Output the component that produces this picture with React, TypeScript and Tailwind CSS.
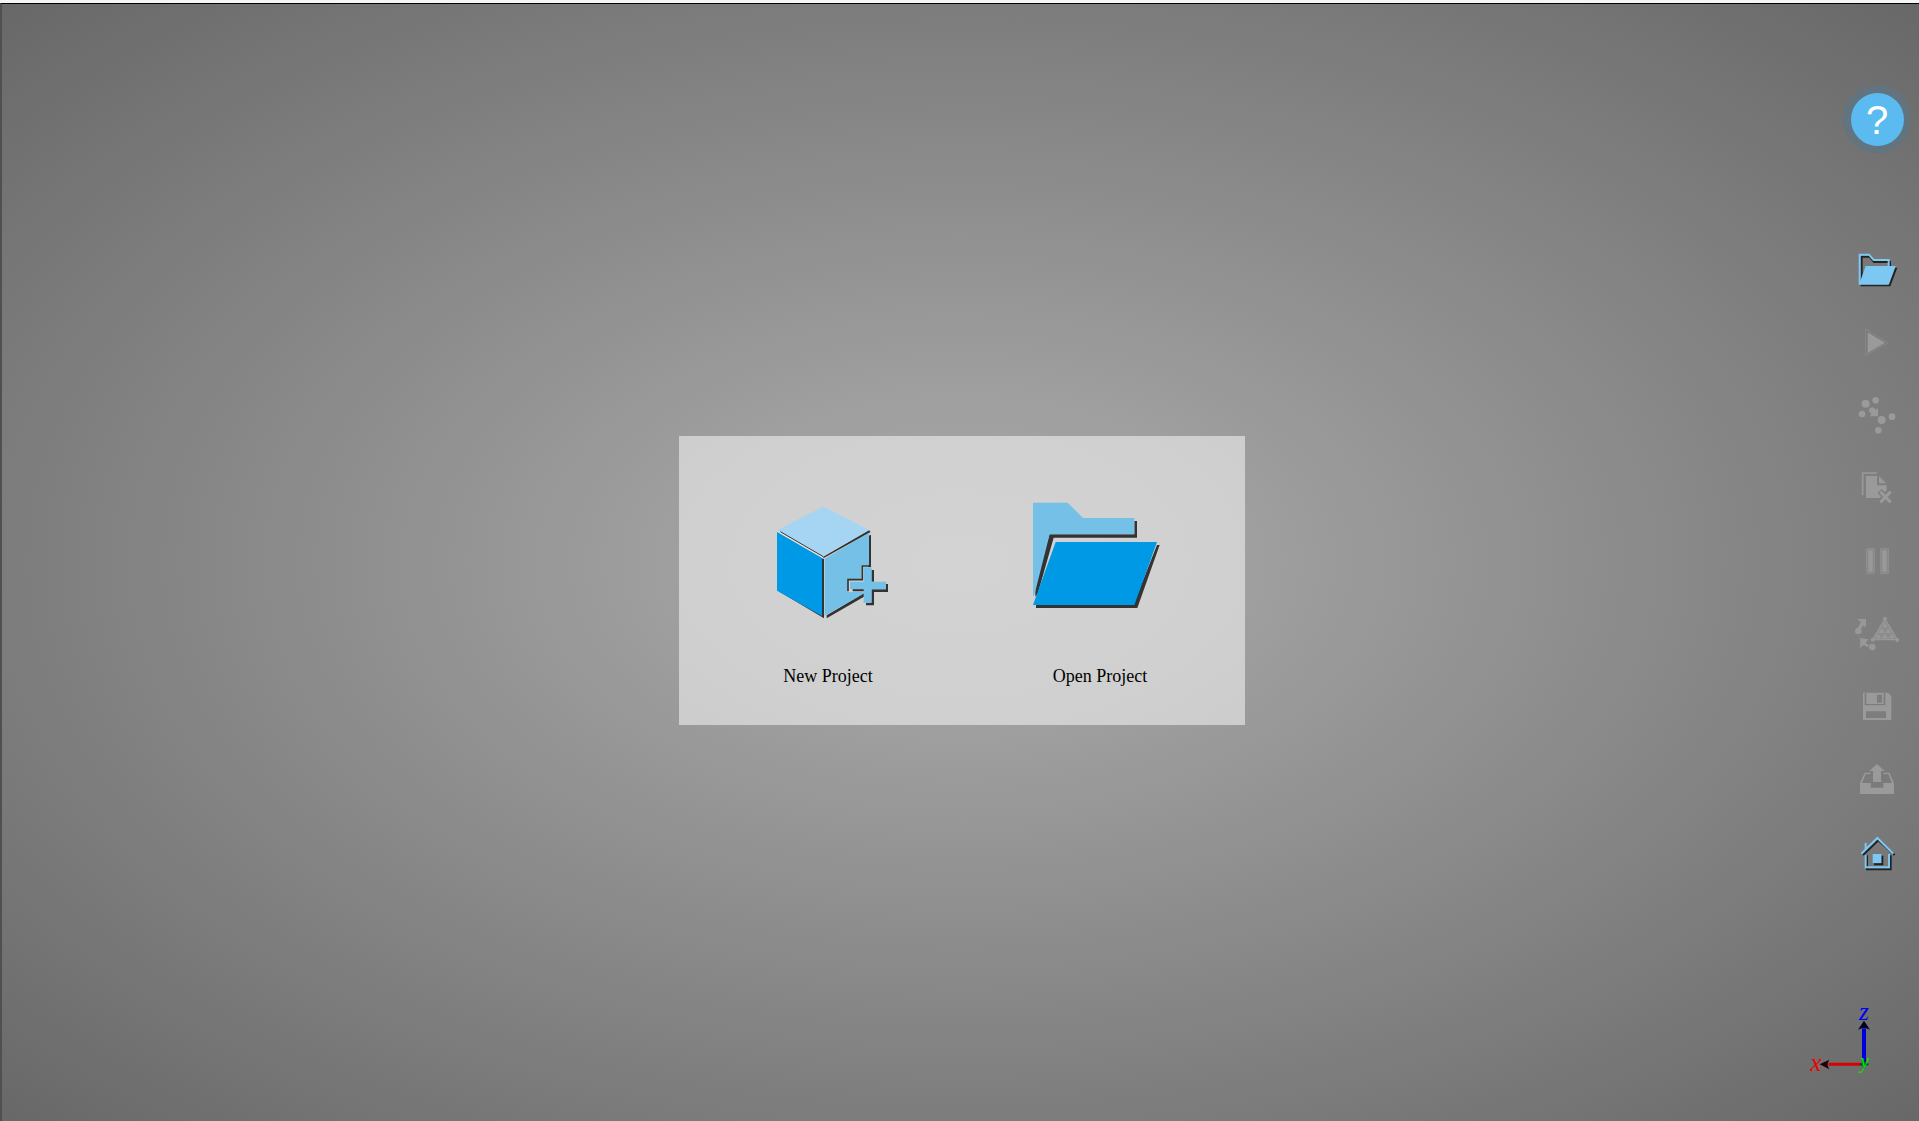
import type { ReactNode } from 'react';

const INK = '#333';
const SKY = '#74c0e6';
const AZURE = '#0099e6';

function NewProjectIcon() {
  return (
    <svg viewBox="258 195 432 432" className="size-36" aria-hidden="true">
      <path d="M331 306 460 380 597 301 602 306 460 385Z" fill={INK} />
      <path d="M323 300 460 230 597 300 460 378Z" fill="#a6d4f3" />
      <path d="M329 303 460 378V386L329 309Z" fill="#e4e4e4" />
      <path d="M331 305 460 380" stroke={INK} strokeWidth="3" />
      <path d="M330 486 462 565V388L456 385Z" fill={INK} />
      <path d="M321 306 456 384V558L321 482Z" fill={AZURE} />
      <path d="M470 565V556L582 490V500Z" fill={INK} />
      <path d="M595 318 603 314V411H595Z" fill={INK} />
      <path d="M464 386 597 308V406H574V447H532V486H580V491L468 555 464 558Z" fill={SKY} />
      <path d="M534 484V449H577V408H602" fill="none" stroke={INK} strokeWidth="5" />
      <path d="M548 476H584V484H548ZM604 420H612V455H604ZM646 462H654V486H612V526H588V518H604V478H646Z" fill={INK} />
      <path d="M581 412H605V455H648V478H605V518H581V478H540V455H581Z" fill={SKY} />
    </svg>
  );
}

function OpenProjectIcon() {
  return (
    <svg viewBox="204 195 432 432" className="size-36" aria-hidden="true">
      <path d="M523 273H531V323H281L233 492 226 500V470L268 313H523Z" fill={INK} />
      <path d="M219 218H323L369 264H523V313H269L226 484 222 497H219Z" fill={SKY} />
      <path d="M591 345H599L532 534H228V524H520Z" fill={INK} />
      <path d="M287 336H591L523 525H219Z" fill={AZURE} />
    </svg>
  );
}

type Tool = { label: string; box: string; enabled?: boolean; art: ReactNode };

const TOOLS: Tool[] = [
  {
    label: 'Open project',
    box: '6 -18 216 216',
    enabled: true,
    art: (
      <>
        <path d="M68 137V50H92L105 66H153V80" fill="none" stroke="#222" strokeWidth="6" />
        <path d="M168 83H175L154 139H65V133H150Z" fill="#222" />
        <path d="M62 134V44H90L104 60H149V78" fill="none" stroke="#7cc8f3" strokeWidth="6" />
        <path d="M80 78H170L149 134H60Z" fill="#7cc8f3" />
      </>
    ),
  },
  {
    label: 'Start',
    box: '6 201 216 216',
    art: (
      <>
        <path d="M80 267 147 308 80 348Z" fill="none" stroke="#888" strokeWidth="3" />
        <path d="M86 277 138 308 86 339Z" />
      </>
    ),
  },
  {
    label: 'Point cloud',
    box: '6 0 216 216',
    art: (
      <>
        <circle cx="80" cy="71" r="12" />
        <circle cx="110" cy="61" r="10" />
        <circle cx="69" cy="102" r="10" />
        <circle cx="128" cy="120" r="12" />
        <circle cx="159" cy="110" r="10" />
        <circle cx="118" cy="151" r="10" />
        <path d="M90 88Q98 78 106 84L110 90 117 84V109H92L98 101Q88 98 90 88Z" />
      </>
    ),
  },
  {
    label: 'Delete files',
    box: '6 219 216 216',
    art: (
      <>
        <path d="M71 346V279H113" fill="none" stroke="#9a9a9a" strokeWidth="5" />
        <path d="M81 288H114V316H143V331L138 336 127 327 116 339 126 350 122 354H81Z" />
        <path d="M120 289 141 310H120Z" />
        <path d="M124 335 155 367M155 335 124 367" stroke="#9a9a9a" strokeWidth="9" />
      </>
    ),
  },
  {
    label: 'Pause',
    box: '6 -12 216 216',
    art: (
      <>
        <path
          d="M83 56H106V130H83ZM125 56H148V130H125Z"
          fill="#888"
          stroke="#919191"
          strokeWidth="3"
        />
        <path d="M88 61H101V125H88ZM130 61H143V125H130Z" fill="#999" />
      </>
    ),
  },
  {
    label: 'Generate mesh',
    box: '6 207 216 216',
    art: (
      <g fill="#989898" stroke="#989898" strokeWidth="0">
        <path d="M138 267 101 329H175Z" fill="#8c8c8c" strokeWidth="4" />
        <circle cx="58" cy="303" r="10" />
        <circle cx="100" cy="351" r="10" />
        <path d="M54 267H81V292L74 286 64 298 57 292 66 277Z" />
        <path d="M57 310 64 324 88 328 80 338 90 345 86 352 74 345 63 354 64 328Z" />
        <circle cx="138" cy="266" r="6" />
        <circle cx="101" cy="329" r="6" />
        <circle cx="175" cy="330" r="6" />
        <path d="M138 277 146 292H130ZM128 294 137 309H119ZM148 294 157 309H139ZM118 311 127 325H109ZM138 311 147 325H129ZM158 311 167 325H149Z" />
      </g>
    ),
  },
  {
    label: 'Save',
    box: '6 -24 216 216',
    art: (
      <path
        fillRule="evenodd"
        d="M72 38H147L157 49V120H72ZM77 40V76H139V40H134V72H82V40ZM114 44V68H129V44ZM81 94V114H141V94Z"
      />
    ),
  },
  {
    label: 'Export',
    box: '6 195 216 216',
    art: (
      <>
        <path d="M114 252 137 273H126V306H102V273H91Z" />
        <path d="M77 278H95V282H80L69 309H95V323H133V309H159L148 282H133V278H151L165 309V342H63V309Z" />
      </>
    ),
  },
  {
    label: 'Home',
    box: '6 414 216 216',
    enabled: true,
    art: (
      <>
        <path d="M72 525 118 481 167 525M84 526V568H155V526M105 553H130V527" fill="none" stroke="#222" strokeWidth="6" />
        <path d="M67 521 115 474 163 521M80 508V489M80 525V562H150V522" fill="none" stroke="#7cc8f3" strokeWidth="6" />
        <path d="M101 522H127V549H101Z" fill="#7cc8f3" />
      </>
    ),
  },
];

function AxisTriad() {
  return (
    <svg
      viewBox="0 -60 360 423"
      className="h-[141px] w-[120px] self-end justify-self-end [grid-area:1/1]"
      fontFamily="'Liberation Serif', serif"
      fontStyle="italic"
      role="img"
      aria-label="Axis orientation"
    >
      <path d="M195 85V186" stroke="#0000d8" strokeWidth="12" />
      <path d="M195 62 213 89 200 84H190L177 89Z" fill="#000020" />
      <path d="M88 193H184" stroke="#d80000" strokeWidth="9" />
      <path d="M62 193 91 179 86 189V198L91 208Z" fill="#200000" />
      <text x="180" y="60" fontSize="76" fill="#0000f0">z</text>
      <text x="34" y="213" fontSize="76" fill="#f00000">x</text>
      <path d="M183 193H208M195 180V205" stroke="#003a00" strokeWidth="6" />
      <circle cx="195" cy="193" r="8" fill="#063" />
      <text x="184" y="204" fontSize="60" fill="#00e800">y</text>
    </svg>
  );
}

export default function App() {
  return (
    <div className="flex min-h-screen flex-col border-t-[3px] border-[#f5f5f5] font-['Liberation_Serif',serif] text-black">
      <div className="grid flex-1 grid-cols-1 grid-rows-1 border-t border-l-2 border-t-black border-l-[#505050] bg-[radial-gradient(ellipse_farthest-corner_at_center,#a7a7a7_0%,#a0a0a0_20%,#7d7d7d_70%,#686868_100%)]">
        <main className="flex items-center justify-center pt-9 pl-[3px] [grid-area:1/1]">
          <div className="grid grid-cols-2 bg-white/50 pt-[59px] pr-[9px] pb-[37px] pl-[13px]">
            <button type="button" className="flex w-[272px] flex-col items-center gap-[25px] text-lg leading-6">
              <NewProjectIcon />
              New Project
            </button>
            <button type="button" className="flex w-[272px] flex-col items-center gap-[25px] text-lg leading-6">
              <OpenProjectIcon />
              Open Project
            </button>
          </div>
        </main>

        <aside className="flex w-[84px] flex-col items-center justify-self-end pt-[81px] [grid-area:1/1]">
          <button
            type="button"
            aria-label="Help"
            className="flex size-[68px] items-center justify-center rounded-full bg-[#61747f]"
          >
            <span className="flex size-[53px] items-center justify-center rounded-full bg-[#5bbaf0] pt-0.5 font-['Liberation_Sans',sans-serif] text-[40px] leading-none text-white">
              ?
            </span>
          </button>
          <nav aria-label="Tools" className="mt-[81px] flex flex-col gap-px">
            {TOOLS.map((tool) => (
              <button key={tool.label} type="button" aria-label={tool.label} disabled={!tool.enabled}>
                <svg viewBox={tool.box} className="size-[72px]" fill="#9a9a9a" aria-hidden="true">
                  {tool.art}
                </svg>
              </button>
            ))}
          </nav>
        </aside>

        <AxisTriad />
      </div>
    </div>
  );
}
